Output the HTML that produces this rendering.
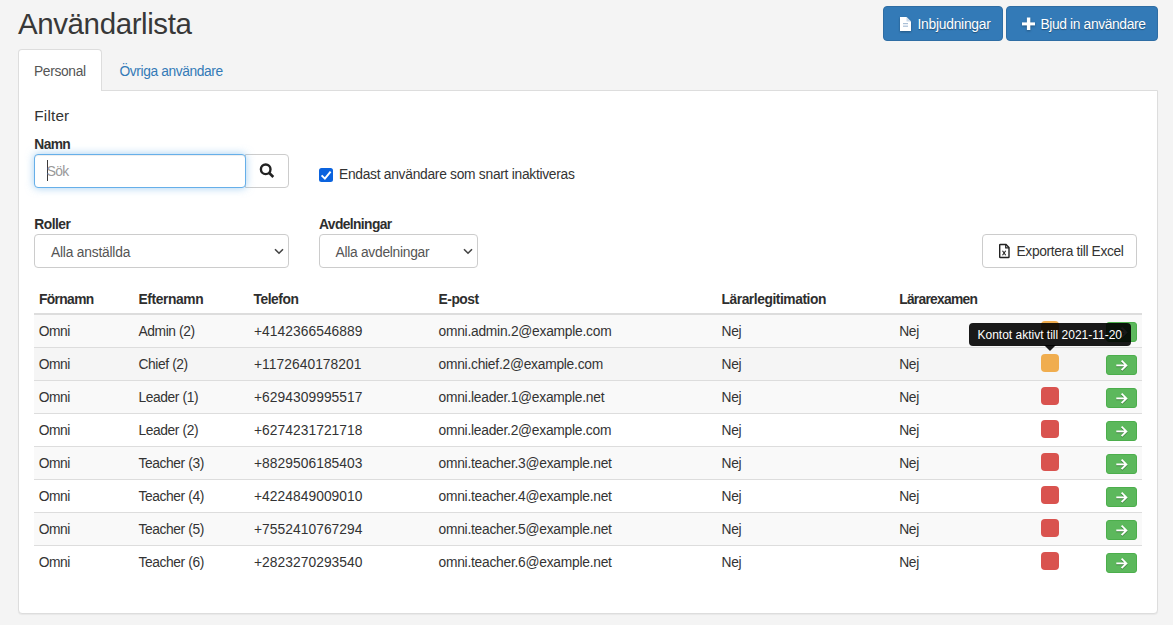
<!DOCTYPE html>
<html><head><meta charset="utf-8">
<style>
*{box-sizing:border-box;margin:0;padding:0}
html,body{width:1173px;height:625px;overflow:hidden;background:#f4f4f4;font-family:"Liberation Sans",sans-serif;color:#333}
.t{position:absolute;white-space:nowrap;font-size:13.5px;line-height:1;letter-spacing:-0.2px;color:#333}
.b{font-weight:bold;letter-spacing:-0.45px;color:#262626}
.ph{letter-spacing:0.15px}
.h1{position:absolute;left:18px;top:9.45px;font-size:29px;line-height:1;letter-spacing:-0.13px;color:#2b2b2b;white-space:nowrap}
.btn{position:absolute;top:6px;height:35px;background:#337ab7;border:1px solid #2e6da4;border-radius:4px}
.bt{color:#fff;text-shadow:0 1px 1px rgba(0,0,0,.35)}
.tab{position:absolute;left:18px;top:49px;width:84px;height:42px;background:#fff;border:1px solid #ddd;border-bottom:none;border-radius:4px 4px 0 0}
.panel{position:absolute;left:18px;top:90px;width:1140px;height:524px;background:#fff;border:1px solid #ddd;border-radius:0 0 4px 4px;box-shadow:0 1px 1px rgba(0,0,0,.05)}
.inp{position:absolute;border:1px solid #ccc;border-radius:4px;background:#fff}
.hl{position:absolute;left:34px;width:1108px;height:1px;background:#ddd}
.rb{position:absolute;left:34px;width:1108px;height:32px}
.sq{position:absolute;left:1041px;width:18px;height:18px;border-radius:4px}
.go{position:absolute;left:1106px;width:31px;height:20px;background:#5cb85c;border:1px solid #4cae4c;border-radius:3px}
.go svg{position:absolute;left:-1px;top:-1px;filter:drop-shadow(0.5px 1px 0.6px rgba(0,0,0,.3))}
</style></head><body>
<div class="btn" style="left:883px;width:120px"></div>
<svg style="position:absolute;left:900px;top:17px;filter:drop-shadow(0 1px 1px rgba(0,0,0,.3))" width="12" height="15" viewBox="0 0 12 15"><path d="M0 0H6.5L11 4.5V14H0Z" fill="#fff"/><path d="M6.5 0V4.5H11" fill="#c9d9ea"/><rect x="3" y="6" width="5" height="1.2" fill="#a9bfd6"/><rect x="3" y="8.6" width="5" height="1.2" fill="#a9bfd6"/></svg>
<div class="btn" style="left:1006px;width:152px"></div>
<svg style="position:absolute;left:1022px;top:17px;filter:drop-shadow(0 1px 1px rgba(0,0,0,.3))" width="14" height="14" viewBox="0 0 14 14"><rect x="4.9" y="0.5" width="3.4" height="12.5" fill="#fff"/><rect x="0" y="5.4" width="13" height="3" fill="#fff"/></svg>

<div class="panel"></div>
<div class="tab"></div>

<div class="inp" style="left:34px;top:154px;width:212px;height:34px;border-color:#66afe9;box-shadow:inset 0 1px 1px rgba(0,0,0,.075),0 0 8px rgba(102,175,233,.6);z-index:2"></div>
<div style="position:absolute;left:47px;top:160px;width:1px;height:21px;background:#3a3a3a;z-index:3"></div>
<div class="inp" style="left:245px;top:154px;width:44px;height:34px;border-radius:0 4px 4px 0"></div>
<svg style="position:absolute;left:257px;top:161px" width="20" height="20" viewBox="0 0 20 20"><circle cx="8.7" cy="8.3" r="4.8" fill="none" stroke="#222" stroke-width="2.4"/><path d="M12 11.8L16.3 16" stroke="#222" stroke-width="2.6"/></svg>

<div style="position:absolute;left:319px;top:168px;width:14px;height:14px;background:#0b63de;border-radius:2.5px"></div>
<svg style="position:absolute;left:319px;top:168px" width="14" height="14" viewBox="0 0 14 14"><path d="M2.6 7.4L5.9 10.6L11.6 3.6" fill="none" stroke="#fff" stroke-width="2"/></svg>

<div class="inp" style="left:34px;top:234px;width:255px;height:34px"></div>
<svg style="position:absolute;left:274px;top:248px" width="10" height="7" viewBox="0 0 10 7"><path d="M1 1.2L5 5.2L9 1.2" fill="none" stroke="#444" stroke-width="1.6"/></svg>

<div class="inp" style="left:319px;top:234px;width:159px;height:34px"></div>
<svg style="position:absolute;left:463px;top:248px" width="10" height="7" viewBox="0 0 10 7"><path d="M1 1.2L5 5.2L9 1.2" fill="none" stroke="#444" stroke-width="1.6"/></svg>

<div class="inp" style="left:982px;top:234px;width:155px;height:34px"></div>
<svg style="position:absolute;left:998px;top:243px" width="13" height="16" viewBox="0 0 13 16"><path d="M2.4 1.5H8L11 4.5V13.9Q11 14.5 10.4 14.5H2.4Q1.7 14.5 1.7 13.9V2.1Q1.7 1.5 2.4 1.5Z" fill="none" stroke="#222" stroke-width="1.4"/><path d="M7.7 1.5V4.8H11" fill="none" stroke="#222" stroke-width="1.2"/><path d="M4.5 7.7L7.7 12.3M7.7 7.7L4.5 12.3" stroke="#222" stroke-width="1.1"/></svg>

<div class="hl" style="top:313px;height:2px"></div>
<div class="rb" style="top:315px;background:#f9f9f9"></div>
<div class="sq" style="top:321px;background:#f0ad4e"></div>
<div class="go" style="top:322px"><svg width="31" height="20" viewBox="0 0 31 20"><g fill="none" stroke="#fff" stroke-width="1.8"><path d="M10.3 10.4H20.6M15.6 5.6L20.4 10.4L15.6 15.2"/></g></svg></div>
<div class="hl" style="top:347px"></div>
<div class="rb" style="top:348px;background:#f5f5f5"></div>
<div class="sq" style="top:354px;background:#f0ad4e"></div>
<div class="go" style="top:355px"><svg width="31" height="20" viewBox="0 0 31 20"><g fill="none" stroke="#fff" stroke-width="1.8"><path d="M10.3 10.4H20.6M15.6 5.6L20.4 10.4L15.6 15.2"/></g></svg></div>
<div class="hl" style="top:380px"></div>
<div class="rb" style="top:381px;background:#f9f9f9"></div>
<div class="sq" style="top:387px;background:#d9534f"></div>
<div class="go" style="top:388px"><svg width="31" height="20" viewBox="0 0 31 20"><g fill="none" stroke="#fff" stroke-width="1.8"><path d="M10.3 10.4H20.6M15.6 5.6L20.4 10.4L15.6 15.2"/></g></svg></div>
<div class="hl" style="top:413px"></div>
<div class="sq" style="top:420px;background:#d9534f"></div>
<div class="go" style="top:421px"><svg width="31" height="20" viewBox="0 0 31 20"><g fill="none" stroke="#fff" stroke-width="1.8"><path d="M10.3 10.4H20.6M15.6 5.6L20.4 10.4L15.6 15.2"/></g></svg></div>
<div class="hl" style="top:446px"></div>
<div class="rb" style="top:447px;background:#f9f9f9"></div>
<div class="sq" style="top:453px;background:#d9534f"></div>
<div class="go" style="top:454px"><svg width="31" height="20" viewBox="0 0 31 20"><g fill="none" stroke="#fff" stroke-width="1.8"><path d="M10.3 10.4H20.6M15.6 5.6L20.4 10.4L15.6 15.2"/></g></svg></div>
<div class="hl" style="top:479px"></div>
<div class="sq" style="top:486px;background:#d9534f"></div>
<div class="go" style="top:487px"><svg width="31" height="20" viewBox="0 0 31 20"><g fill="none" stroke="#fff" stroke-width="1.8"><path d="M10.3 10.4H20.6M15.6 5.6L20.4 10.4L15.6 15.2"/></g></svg></div>
<div class="hl" style="top:512px"></div>
<div class="rb" style="top:513px;background:#f9f9f9"></div>
<div class="sq" style="top:519px;background:#d9534f"></div>
<div class="go" style="top:520px"><svg width="31" height="20" viewBox="0 0 31 20"><g fill="none" stroke="#fff" stroke-width="1.8"><path d="M10.3 10.4H20.6M15.6 5.6L20.4 10.4L15.6 15.2"/></g></svg></div>
<div class="hl" style="top:545px"></div>
<div class="sq" style="top:552px;background:#d9534f"></div>
<div class="go" style="top:553px"><svg width="31" height="20" viewBox="0 0 31 20"><g fill="none" stroke="#fff" stroke-width="1.8"><path d="M10.3 10.4H20.6M15.6 5.6L20.4 10.4L15.6 15.2"/></g></svg></div>
<div class="t" style="left:18px;top:8.63px;font-size:29.5px;font-weight:normal;color:#383838;letter-spacing:-0.404px;">Användarlista</div>
<div class="t" style="left:917.5px;top:18.32px;font-size:13.8px;font-weight:normal;color:#fff;letter-spacing:-0.238px;text-shadow:0 1px 1px rgba(0,0,0,.35);">Inbjudningar</div>
<div class="t" style="left:1040.5px;top:18.32px;font-size:13.8px;font-weight:normal;color:#fff;letter-spacing:-0.367px;text-shadow:0 1px 1px rgba(0,0,0,.35);">Bjud in användare</div>
<div class="t" style="left:34px;top:65.32px;font-size:13.8px;font-weight:normal;color:#555;letter-spacing:-0.334px;">Personal</div>
<div class="t" style="left:119.5px;top:65.32px;font-size:13.8px;font-weight:normal;color:#337ab7;letter-spacing:-0.405px;">Övriga användare</div>
<div class="t" style="left:34.3px;top:108.05px;font-size:15.3px;font-weight:normal;color:#333;letter-spacing:0.183px;">Filter</div>
<div class="t" style="left:34.3px;top:138.32px;font-size:13.8px;font-weight:bold;color:#2e2e2e;letter-spacing:-0.611px;">Namn</div>
<div class="t" style="left:46.8px;top:165.32px;font-size:13.8px;font-weight:normal;color:#999;letter-spacing:-0.760px;z-index:3;">Sök</div>
<div class="t" style="left:339px;top:168.32px;font-size:13.8px;font-weight:normal;color:#333;letter-spacing:-0.279px;">Endast användare som snart inaktiveras</div>
<div class="t" style="left:34.2px;top:218.32px;font-size:13.8px;font-weight:bold;color:#2e2e2e;letter-spacing:-0.468px;">Roller</div>
<div class="t" style="left:51px;top:246.32px;font-size:13.8px;font-weight:normal;color:#555;letter-spacing:-0.213px;">Alla anställda</div>
<div class="t" style="left:319px;top:218.32px;font-size:13.8px;font-weight:bold;color:#2e2e2e;letter-spacing:-0.602px;">Avdelningar</div>
<div class="t" style="left:335.5px;top:246.32px;font-size:13.8px;font-weight:normal;color:#555;letter-spacing:-0.274px;">Alla avdelningar</div>
<div class="t" style="left:1016.5px;top:245.32px;font-size:13.8px;font-weight:normal;color:#333;letter-spacing:-0.362px;">Exportera till Excel</div>
<div class="t" style="left:39px;top:293.32px;font-size:13.8px;font-weight:bold;color:#2e2e2e;letter-spacing:-0.633px;">Förnamn</div>
<div class="t" style="left:138.5px;top:293.32px;font-size:13.8px;font-weight:bold;color:#2e2e2e;letter-spacing:-0.382px;">Efternamn</div>
<div class="t" style="left:253.5px;top:293.32px;font-size:13.8px;font-weight:bold;color:#2e2e2e;letter-spacing:-0.450px;">Telefon</div>
<div class="t" style="left:438.5px;top:293.32px;font-size:13.8px;font-weight:bold;color:#2e2e2e;letter-spacing:-0.450px;">E-post</div>
<div class="t" style="left:721.5px;top:293.32px;font-size:13.8px;font-weight:bold;color:#2e2e2e;letter-spacing:-0.443px;">Lärarlegitimation</div>
<div class="t" style="left:899.2px;top:293.32px;font-size:13.8px;font-weight:bold;color:#2e2e2e;letter-spacing:-0.728px;">Lärarexamen</div>
<div class="t" style="left:38.8px;top:325.32px;font-size:13.8px;font-weight:normal;color:#333;letter-spacing:-0.450px;">Omni</div>
<div class="t" style="left:138.5px;top:325.32px;font-size:13.8px;font-weight:normal;color:#333;letter-spacing:-0.400px;">Admin (2)</div>
<div class="t" style="left:254px;top:325.32px;font-size:13.8px;font-weight:normal;color:#333;letter-spacing:0.050px;">+4142366546889</div>
<div class="t" style="left:438.5px;top:325.32px;font-size:13.8px;font-weight:normal;color:#333;letter-spacing:-0.250px;">omni.admin.2@example.com</div>
<div class="t" style="left:721.5px;top:325.32px;font-size:13.8px;font-weight:normal;color:#333;letter-spacing:-0.300px;">Nej</div>
<div class="t" style="left:899.2px;top:325.32px;font-size:13.8px;font-weight:normal;color:#333;letter-spacing:-0.300px;">Nej</div>
<div class="t" style="left:38.8px;top:358.32px;font-size:13.8px;font-weight:normal;color:#333;letter-spacing:-0.450px;">Omni</div>
<div class="t" style="left:138.5px;top:358.32px;font-size:13.8px;font-weight:normal;color:#333;letter-spacing:-0.400px;">Chief (2)</div>
<div class="t" style="left:254px;top:358.32px;font-size:13.8px;font-weight:normal;color:#333;letter-spacing:0.050px;">+1172640178201</div>
<div class="t" style="left:438.5px;top:358.32px;font-size:13.8px;font-weight:normal;color:#333;letter-spacing:-0.250px;">omni.chief.2@example.com</div>
<div class="t" style="left:721.5px;top:358.32px;font-size:13.8px;font-weight:normal;color:#333;letter-spacing:-0.300px;">Nej</div>
<div class="t" style="left:899.2px;top:358.32px;font-size:13.8px;font-weight:normal;color:#333;letter-spacing:-0.300px;">Nej</div>
<div class="t" style="left:38.8px;top:391.32px;font-size:13.8px;font-weight:normal;color:#333;letter-spacing:-0.450px;">Omni</div>
<div class="t" style="left:138.5px;top:391.32px;font-size:13.8px;font-weight:normal;color:#333;letter-spacing:-0.400px;">Leader (1)</div>
<div class="t" style="left:254px;top:391.32px;font-size:13.8px;font-weight:normal;color:#333;letter-spacing:0.050px;">+6294309995517</div>
<div class="t" style="left:438.5px;top:391.32px;font-size:13.8px;font-weight:normal;color:#333;letter-spacing:-0.250px;">omni.leader.1@example.net</div>
<div class="t" style="left:721.5px;top:391.32px;font-size:13.8px;font-weight:normal;color:#333;letter-spacing:-0.300px;">Nej</div>
<div class="t" style="left:899.2px;top:391.32px;font-size:13.8px;font-weight:normal;color:#333;letter-spacing:-0.300px;">Nej</div>
<div class="t" style="left:38.8px;top:424.32px;font-size:13.8px;font-weight:normal;color:#333;letter-spacing:-0.450px;">Omni</div>
<div class="t" style="left:138.5px;top:424.32px;font-size:13.8px;font-weight:normal;color:#333;letter-spacing:-0.400px;">Leader (2)</div>
<div class="t" style="left:254px;top:424.32px;font-size:13.8px;font-weight:normal;color:#333;letter-spacing:0.050px;">+6274231721718</div>
<div class="t" style="left:438.5px;top:424.32px;font-size:13.8px;font-weight:normal;color:#333;letter-spacing:-0.250px;">omni.leader.2@example.com</div>
<div class="t" style="left:721.5px;top:424.32px;font-size:13.8px;font-weight:normal;color:#333;letter-spacing:-0.300px;">Nej</div>
<div class="t" style="left:899.2px;top:424.32px;font-size:13.8px;font-weight:normal;color:#333;letter-spacing:-0.300px;">Nej</div>
<div class="t" style="left:38.8px;top:457.32px;font-size:13.8px;font-weight:normal;color:#333;letter-spacing:-0.450px;">Omni</div>
<div class="t" style="left:138.5px;top:457.32px;font-size:13.8px;font-weight:normal;color:#333;letter-spacing:-0.400px;">Teacher (3)</div>
<div class="t" style="left:254px;top:457.32px;font-size:13.8px;font-weight:normal;color:#333;letter-spacing:0.050px;">+8829506185403</div>
<div class="t" style="left:438.5px;top:457.32px;font-size:13.8px;font-weight:normal;color:#333;letter-spacing:-0.250px;">omni.teacher.3@example.net</div>
<div class="t" style="left:721.5px;top:457.32px;font-size:13.8px;font-weight:normal;color:#333;letter-spacing:-0.300px;">Nej</div>
<div class="t" style="left:899.2px;top:457.32px;font-size:13.8px;font-weight:normal;color:#333;letter-spacing:-0.300px;">Nej</div>
<div class="t" style="left:38.8px;top:490.32px;font-size:13.8px;font-weight:normal;color:#333;letter-spacing:-0.450px;">Omni</div>
<div class="t" style="left:138.5px;top:490.32px;font-size:13.8px;font-weight:normal;color:#333;letter-spacing:-0.400px;">Teacher (4)</div>
<div class="t" style="left:254px;top:490.32px;font-size:13.8px;font-weight:normal;color:#333;letter-spacing:0.050px;">+4224849009010</div>
<div class="t" style="left:438.5px;top:490.32px;font-size:13.8px;font-weight:normal;color:#333;letter-spacing:-0.250px;">omni.teacher.4@example.net</div>
<div class="t" style="left:721.5px;top:490.32px;font-size:13.8px;font-weight:normal;color:#333;letter-spacing:-0.300px;">Nej</div>
<div class="t" style="left:899.2px;top:490.32px;font-size:13.8px;font-weight:normal;color:#333;letter-spacing:-0.300px;">Nej</div>
<div class="t" style="left:38.8px;top:523.32px;font-size:13.8px;font-weight:normal;color:#333;letter-spacing:-0.450px;">Omni</div>
<div class="t" style="left:138.5px;top:523.32px;font-size:13.8px;font-weight:normal;color:#333;letter-spacing:-0.400px;">Teacher (5)</div>
<div class="t" style="left:254px;top:523.32px;font-size:13.8px;font-weight:normal;color:#333;letter-spacing:0.050px;">+7552410767294</div>
<div class="t" style="left:438.5px;top:523.32px;font-size:13.8px;font-weight:normal;color:#333;letter-spacing:-0.250px;">omni.teacher.5@example.net</div>
<div class="t" style="left:721.5px;top:523.32px;font-size:13.8px;font-weight:normal;color:#333;letter-spacing:-0.300px;">Nej</div>
<div class="t" style="left:899.2px;top:523.32px;font-size:13.8px;font-weight:normal;color:#333;letter-spacing:-0.300px;">Nej</div>
<div class="t" style="left:38.8px;top:556.32px;font-size:13.8px;font-weight:normal;color:#333;letter-spacing:-0.450px;">Omni</div>
<div class="t" style="left:138.5px;top:556.32px;font-size:13.8px;font-weight:normal;color:#333;letter-spacing:-0.400px;">Teacher (6)</div>
<div class="t" style="left:254px;top:556.32px;font-size:13.8px;font-weight:normal;color:#333;letter-spacing:0.050px;">+2823270293540</div>
<div class="t" style="left:438.5px;top:556.32px;font-size:13.8px;font-weight:normal;color:#333;letter-spacing:-0.250px;">omni.teacher.6@example.net</div>
<div class="t" style="left:721.5px;top:556.32px;font-size:13.8px;font-weight:normal;color:#333;letter-spacing:-0.300px;">Nej</div>
<div class="t" style="left:899.2px;top:556.32px;font-size:13.8px;font-weight:normal;color:#333;letter-spacing:-0.300px;">Nej</div>

<div style="position:absolute;left:969px;top:323px;width:162px;height:23px;background:rgba(0,0,0,.9);border-radius:4px"></div>
<svg style="position:absolute;left:1044px;top:345px" width="12" height="6" viewBox="0 0 12 6"><path d="M0 0H12L6 6Z" fill="rgba(0,0,0,.9)"/></svg>
<div style="position:absolute;left:977.5px;top:328.8px;font-size:12px;line-height:1;color:#fff;white-space:nowrap">Kontot aktivt till 2021-11-20</div>
</body></html>
